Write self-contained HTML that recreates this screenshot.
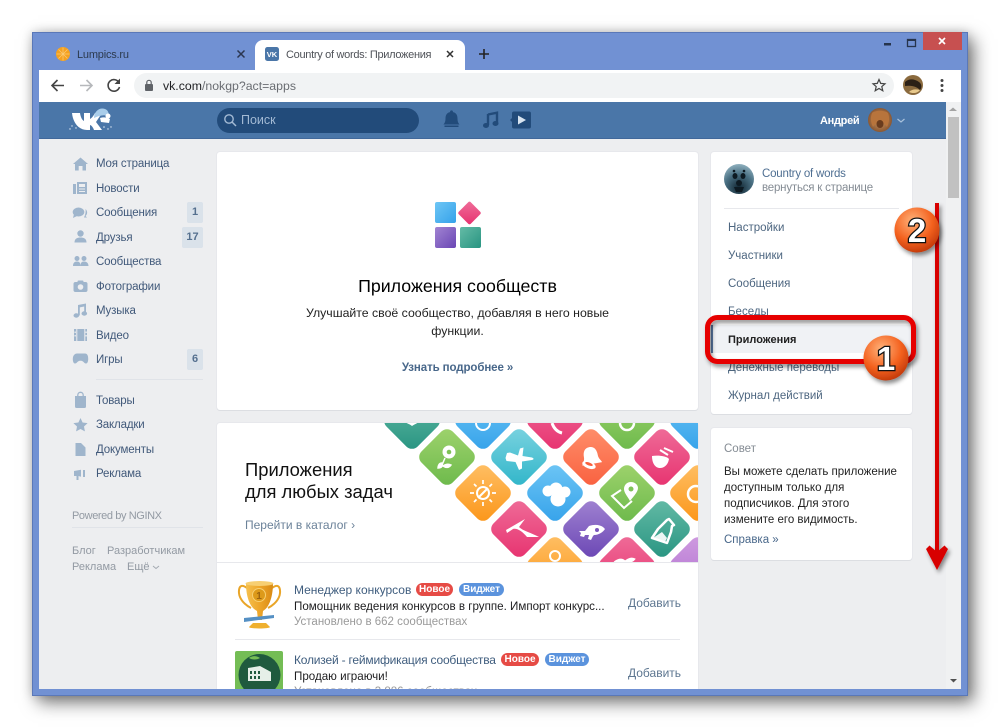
<!DOCTYPE html>
<html><head><meta charset="utf-8">
<style>
html,body{margin:0;padding:0;background:#fff;width:1000px;height:728px;overflow:hidden}
body{font-family:"Liberation Sans","Noto Sans CJK JP",sans-serif;position:relative}
.t{position:absolute;white-space:nowrap;line-height:16px;font-size:12px}
.b{position:absolute}
#win{position:absolute;left:32px;top:32px;width:936px;height:664px;background:#7191d3;box-shadow:6px 7px 16px rgba(0,0,0,.5),0 0 10px rgba(0,0,0,.18);outline:1px solid #5a78b8;outline-offset:-1px}
#page{position:absolute;left:39px;top:102px;width:922px;height:587px;background:#edeef0;overflow:hidden}
.in{position:absolute;left:-39px;top:-102px;width:1000px;height:728px}
.card{position:absolute;background:#fff;border-radius:3px;box-shadow:0 1px 0 #dcdee2,0 0 0 1px #e7e8ec}
.s{color:#41597a;left:96px;font-size:11.5px;letter-spacing:-.15px;margin-top:1px}
.r{color:#4d6680;left:728px;font-size:11.5px;margin-top:1px}
.badge{position:absolute;background:#dae2ea;border-radius:2px;color:#55708f;font-size:11px;text-align:center;line-height:21px;height:21px;font-weight:bold}
.pill{position:absolute;height:13px;line-height:13px;border-radius:7px;color:#fff;font-size:10px;font-weight:bold;text-align:center}
.f{color:#939aa3;font-size:11px}
</style></head>
<body>
<div id="win"></div>

<!-- tab strip -->
<div class="b" style="left:255px;top:40px;width:210px;height:30px;background:#fff;border-radius:8px 8px 0 0"></div>
<div class="b" style="left:39px;top:70px;width:922px;height:32px;background:#fff"></div>
<div class="b" style="left:134px;top:73px;width:760px;height:25px;background:#f1f3f4;border-radius:13px"></div>
<span class="t" style="left:77px;top:47px;color:#2c3a4e;font-size:11px;letter-spacing:-.2px">Lumpics.ru</span>
<span class="t" style="left:286px;top:47px;color:#4f5258;font-size:11px;letter-spacing:-.3px">Country of words: Приложения</span>
<span class="t" style="left:163px;top:78px;font-size:12.3px;color:#202124">vk.com<span style="color:#6a6d72">/nokgp?act=apps</span></span>

<div id="page"><div class="in">
  <div class="b" style="left:39px;top:102px;width:907px;height:36px;background:#4a76a8;box-shadow:0 1px 0 #41689a"></div>
  <div class="b" style="left:217px;top:108px;width:202px;height:25px;background:#224b7a;border-radius:13px"></div>
  <span class="t" style="left:241px;top:112px;color:#a3bad4;font-size:12.5px">Поиск</span>
  <span class="t" style="left:820px;top:113px;color:#fff;font-size:11px;font-weight:bold;letter-spacing:-.3px">Андрей</span>

  <!-- scrollbar -->
  <div class="b" style="left:946px;top:102px;width:15px;height:587px;background:#f0f1f2"></div>
  <div class="b" style="left:948px;top:117px;width:11px;height:81px;background:#c1c1c1"></div>

  <!-- left menu -->
  <span class="t s" style="top:155px">Моя страница</span>
  <span class="t s" style="top:180px">Новости</span>
  <span class="t s" style="top:204px">Сообщения</span>
  <span class="t s" style="top:229px">Друзья</span>
  <span class="t s" style="top:253px">Сообщества</span>
  <span class="t s" style="top:278px">Фотографии</span>
  <span class="t s" style="top:302px">Музыка</span>
  <span class="t s" style="top:327px">Видео</span>
  <span class="t s" style="top:351px">Игры</span>
  <div class="badge" style="left:187px;top:202px;width:16px">1</div>
  <div class="badge" style="left:182px;top:227px;width:21px">17</div>
  <div class="badge" style="left:187px;top:349px;width:16px">6</div>
  <div class="b" style="left:96px;top:379px;width:107px;height:1px;background:#e0e3e8"></div>
  <span class="t s" style="top:392px">Товары</span>
  <span class="t s" style="top:416px">Закладки</span>
  <span class="t s" style="top:441px">Документы</span>
  <span class="t s" style="top:465px">Реклама</span>
  <span class="t f" style="left:72px;top:508px;letter-spacing:-.4px">Powered by NGINX</span>
  <div class="b" style="left:72px;top:527px;width:131px;height:1px;background:#e0e3e8"></div>
  <span class="t f" style="left:72px;top:543px">Блог</span>
  <span class="t f" style="left:107px;top:543px">Разработчикам</span>
  <span class="t f" style="left:72px;top:559px">Реклама</span>
  <span class="t f" style="left:127px;top:559px">Ещё</span>

  <!-- centre card -->
  <div class="card" style="left:217px;top:152px;width:481px;height:258px"></div>
  <span class="t" style="left:217px;width:481px;text-align:center;top:277px;line-height:18px;font-size:17.8px;color:#000">Приложения сообществ</span>
  <span class="t" style="left:217px;width:481px;text-align:center;top:305px;font-size:12.3px;color:#222">Улучшайте своё сообщество, добавляя в него новые</span>
  <span class="t" style="left:217px;width:481px;text-align:center;top:323px;font-size:12.3px;color:#222">функции.</span>
  <span class="t" style="left:217px;width:481px;text-align:center;top:360px;font-size:11.5px;color:#48678a;font-weight:bold;letter-spacing:-.1px">Узнать подробнее »</span>

  <!-- banner card -->
  <div class="card" style="left:217px;top:423px;width:481px;height:320px"></div>
  <span class="t" style="left:245px;top:461px;line-height:18px;font-size:18.4px;color:#111">Приложения</span>
  <span class="t" style="left:245px;top:483px;line-height:18px;font-size:18.4px;color:#111">для любых задач</span>
  <span class="t" style="left:245px;top:517px;font-size:12px;color:#6b8299">Перейти в каталог ›</span>
  <div class="b" style="left:217px;top:562px;width:481px;height:1px;background:#e7e8ec"></div>

  <!-- row 1 -->
  <span class="t" style="left:294px;top:582px;font-size:12px;color:#3f5d7e">Менеджер конкурсов</span>
  <div class="pill" style="left:416px;top:583px;width:37px;background:#e64b45">Новое</div>
  <div class="pill" style="left:459px;top:583px;width:45px;background:#5b93dd">Виджет</div>
  <span class="t" style="left:294px;top:598px;font-size:11.6px;color:#1d1d1f;margin-top:1px">Помощник ведения конкурсов в группе. Импорт конкурс...</span>
  <span class="t" style="left:294px;top:614px;font-size:11.5px;color:#9a9a9a">Установлено в 662 сообществах</span>
  <span class="t" style="left:628px;top:595px;font-size:12px;color:#5d7690">Добавить</span>
  <div class="b" style="left:235px;top:639px;width:445px;height:1px;background:#e7e8ec"></div>
  <!-- row 2 -->
  <span class="t" style="left:294px;top:652px;font-size:12px;letter-spacing:-.2px;color:#3f5d7e">Колизей - геймификация сообщества</span>
  <div class="pill" style="left:501px;top:653px;width:38px;background:#e64b45">Новое</div>
  <div class="pill" style="left:545px;top:653px;width:44px;background:#5b93dd">Виджет</div>
  <span class="t" style="left:294px;top:669px;font-size:11.6px;color:#1d1d1f">Продаю играючи!</span>
  <span class="t" style="left:294px;top:684px;font-size:11.5px;color:#9a9a9a">Установлено в 3 886 сообществах</span>
  <span class="t" style="left:628px;top:665px;font-size:12px;color:#5d7690">Добавить</span>

  <!-- right card -->
  <div class="card" style="left:711px;top:152px;width:201px;height:262px"></div>
  <span class="t" style="left:762px;top:166px;font-size:11.5px;letter-spacing:-.2px;color:#4f6f92">Country of words</span>
  <span class="t" style="left:762px;top:180px;font-size:11.5px;letter-spacing:-.2px;color:#858c94">вернуться к странице</span>
  <div class="b" style="left:724px;top:208px;width:175px;height:1px;background:#e7e8ec"></div>
  <span class="t r" style="top:219px">Настройки</span>
  <span class="t r" style="top:247px">Участники</span>
  <span class="t r" style="top:275px">Сообщения</span>
  <span class="t r" style="top:303px">Беседы</span>
  <div class="b" style="left:711px;top:325px;width:201px;height:28px;background:#f0f2f5"></div>
  <div class="b" style="left:711px;top:325px;width:2px;height:28px;background:#5b7ba6"></div>
  <span class="t" style="left:728px;top:332px;font-size:11px;font-weight:bold;color:#222">Приложения</span>
  <span class="t r" style="top:359px">Денежные переводы</span>
  <span class="t r" style="top:387px">Журнал действий</span>

  <div class="card" style="left:711px;top:428px;width:201px;height:132px"></div>
  <span class="t" style="left:724px;top:441px;font-size:11.5px;color:#858c94">Совет</span>
  <span class="t" style="left:724px;top:464px;font-size:11.5px;color:#222">Вы можете сделать приложение</span>
  <span class="t" style="left:724px;top:480px;font-size:11.5px;color:#222">доступным только для</span>
  <span class="t" style="left:724px;top:496px;font-size:11.5px;color:#222">подписчиков. Для этого</span>
  <span class="t" style="left:724px;top:512px;font-size:11.5px;color:#222">измените его видимость.</span>
  <span class="t" style="left:724px;top:532px;font-size:11.5px;color:#48678a">Справка »</span>
</div></div>

<svg class="b" style="left:0;top:0" width="1000" height="728" viewBox="0 0 1000 728" xmlns="http://www.w3.org/2000/svg">
<defs>
 <linearGradient id="gG" x1="0" y1="0" x2="1" y2="1"><stop offset="0" stop-color="#9fd36d"/><stop offset="1" stop-color="#6cb94b"/></linearGradient>
 <linearGradient id="gB" x1="0" y1="0" x2="1" y2="1"><stop offset="0" stop-color="#6ec6f5"/><stop offset="1" stop-color="#35a2ea"/></linearGradient>
 <linearGradient id="gT" x1="0" y1="0" x2="1" y2="1"><stop offset="0" stop-color="#7bd3e0"/><stop offset="1" stop-color="#2fb5c9"/></linearGradient>
 <linearGradient id="gR" x1="0" y1="0" x2="1" y2="1"><stop offset="0" stop-color="#ff8f6b"/><stop offset="1" stop-color="#f9603f"/></linearGradient>
 <linearGradient id="gP" x1="0" y1="0" x2="1" y2="1"><stop offset="0" stop-color="#ef6d99"/><stop offset="1" stop-color="#e7326f"/></linearGradient>
 <linearGradient id="gO" x1="0" y1="0" x2="1" y2="1"><stop offset="0" stop-color="#ffc066"/><stop offset="1" stop-color="#fb9518"/></linearGradient>
 <linearGradient id="gV" x1="0" y1="0" x2="1" y2="1"><stop offset="0" stop-color="#a184d2"/><stop offset="1" stop-color="#6a46b4"/></linearGradient>
 <linearGradient id="gE" x1="0" y1="0" x2="1" y2="1"><stop offset="0" stop-color="#64bba6"/><stop offset="1" stop-color="#289481"/></linearGradient>
 <linearGradient id="gL" x1="0" y1="0" x2="1" y2="1"><stop offset="0" stop-color="#cf9be0"/><stop offset="1" stop-color="#b070d0"/></linearGradient>
 <linearGradient id="gCup" x1="0" y1="0" x2="1" y2="0"><stop offset="0" stop-color="#f5c04e"/><stop offset=".5" stop-color="#eea62a"/><stop offset="1" stop-color="#d98a14"/></linearGradient>
 <radialGradient id="ball" cx=".5" cy=".8" r=".8"><stop offset="0" stop-color="#0f2430"/><stop offset=".6" stop-color="#4b7184"/><stop offset="1" stop-color="#8fb0be"/></radialGradient>
 <radialGradient id="orb" cx=".4" cy=".3" r=".8"><stop offset="0" stop-color="#ffb27a"/><stop offset=".55" stop-color="#f4621f"/><stop offset="1" stop-color="#b52f05"/></radialGradient>
 <radialGradient id="dog" cx=".5" cy=".5" r=".6"><stop offset="0" stop-color="#d59a60"/><stop offset="1" stop-color="#7a4a2a"/></radialGradient>
 <clipPath id="ban"><rect x="380" y="423" width="318" height="139"/></clipPath>
 <clipPath id="bot"><rect x="0" y="0" width="1000" height="689"/></clipPath>
 <filter id="sh" x="-20%" y="-20%" width="150%" height="150%"><feDropShadow dx="2" dy="3" stdDeviation="2.200" flood-color="#000" flood-opacity=".45"/></filter>
 <g id="dm"><rect x="-22" y="-22" width="44" height="44" rx="8"/></g>
</defs>

<!-- tab bar icons -->
<circle cx="63" cy="54" r="7" fill="#f5a11f"/>
<path d="M63 47.5v13M56.5 54h13M58.5 49.5l9 9M67.500 49.5l-9 9" stroke="#fbc871" stroke-width=".8"/>
<path d="M237.500 50.500l7 7M244.500 50.500l-7 7" stroke="#2b3650" stroke-width="1.500"/>
<rect x="265" y="47" width="14" height="14" rx="2.500" fill="#4a76a8"/>
<text x="272" y="57" font-size="7.500" font-weight="bold" fill="#fff" text-anchor="middle" font-family="Liberation Sans">VK</text>
<path d="M447 51l6 6M453 51l-6 6" stroke="#333" stroke-width="1.500"/>
<path d="M484 49v10M479 54h10" stroke="#222" stroke-width="1.600"/>
<!-- window controls -->
<rect x="923" y="32" width="39" height="18" fill="#c75050"/>
<path d="M939 38l6 6M945 38l-6 6" stroke="#fff" stroke-width="1.700"/>
<rect x="884" y="43" width="7" height="2.500" fill="#26344c"/>
<rect x="907.500" y="39.500" width="8" height="7" fill="none" stroke="#26344c" stroke-width="1.300"/>
<path d="M907 40h9" stroke="#26344c" stroke-width="2"/>
<!-- toolbar -->
<g fill="none" stroke-width="1.600">
 <path d="M64 85.500H52.500M57.500 80l-5.500 5.500 5.500 5.500" stroke="#444"/>
 <path d="M80 85.500h11.500M86.500 80l5.500 5.500-5.500 5.500" stroke="#b6b8bb"/>
 <path d="M119.200 83a5.800 5.800 0 1 0 .3 4" stroke="#444"/>
</g>
<path d="M120 78.500v5.500h-5.500z" fill="#444"/>
<rect x="145" y="84" width="8" height="7" rx="1" fill="#5f6368"/>
<path d="M146.800 84v-1.500a2.200 2.200 0 0 1 4.400 0V84" fill="none" stroke="#5f6368" stroke-width="1.200"/>
<path d="M879 79.500l1.700 3.900 4.300.4-3.200 2.800 1 4.200-3.800-2.300-3.800 2.300 1-4.200-3.200-2.800 4.300-.4z" fill="none" stroke="#444" stroke-width="1.200"/>
<circle cx="913" cy="85" r="10" fill="#8a6a3e"/>
<path d="M905 82c4-4 10-3 14 0 3 2 3 6 1 8-3-3-7-5-15-4z" fill="#2b2016"/>
<path d="M909 92c3-3 7-3 11-2-2 3-7 4-11 2z" fill="#e8c98c"/>
<g fill="#444"><circle cx="942" cy="80.500" r="1.500"/><circle cx="942" cy="85.500" r="1.500"/><circle cx="942" cy="90.500" r="1.500"/></g>

<!-- VK header -->
<path d="M72 113h8c.6 4 2 7 4 8v-8h6v6c2-1 4-4 5-6h7l-6 9 6 8h-8c-1-3-3-5-4-5v5h-3c-8 0-14-7-15-17z" fill="#fff"/>
<path d="M94 118c0-7 6-11 11-9 3 1 4 4 4 8-3-3-9-2-15 1z" fill="#a9cdea"/>
<circle cx="108" cy="116" r="2.500" fill="#fff"/>
<path d="M100 118c3-1 7-1 10 1l-1 4-8-1z" fill="#fff"/>
<g fill="#dfe9f3"><circle cx="72" cy="126" r=".7"/><circle cx="76" cy="128" r=".7"/><circle cx="104" cy="127" r=".8"/><circle cx="108" cy="129" r=".7"/><circle cx="111" cy="127" r=".7"/><circle cx="70" cy="129" r=".7"/></g>
<circle cx="229" cy="119" r="4.200" fill="none" stroke="#a3bad4" stroke-width="1.400"/>
<path d="M232 122l4 4" stroke="#a3bad4" stroke-width="1.500"/>
<path d="M451.500 112c-4.500 0-6 3-6 6.500 0 3-.8 4.500-2 6h16c-1.200-1.500-2-3-2-6 0-3.500-1.500-6.500-6-6.500z" fill="#224b7a"/>
<rect x="444.500" y="125.500" width="14" height="1.500" fill="#224b7a"/><circle cx="451.500" cy="111.800" r="1.400" fill="#224b7a"/>
<path d="M488 114.500l9-1.800v10.800" fill="none" stroke="#224b7a" stroke-width="2.400"/><path d="M488 114v11" stroke="#224b7a" stroke-width="2.400"/>
<ellipse cx="486" cy="125.500" rx="3" ry="2.500" fill="#224b7a"/><ellipse cx="495.500" cy="123.500" rx="3" ry="2.500" fill="#224b7a"/>
<rect x="512" y="111.500" width="19" height="17" rx="2" fill="#224b7a"/><path d="M510 120l2.500-2.500v5z" fill="#224b7a"/>
<path d="M518 115.500l8 4.500-8 4.500z" fill="#d8e4f0"/>
<circle cx="880" cy="120" r="12" fill="url(#dog)"/>
<path d="M872 113c3-3 13-3 16 0 2 5 1 10-1 14-2-3-4-4-7-4s-5 1-7 4c-2-4-3-9-1-14z" fill="#b8743c"/>
<ellipse cx="880" cy="124" rx="3.500" ry="4" fill="#6a3c1e"/>
<path d="M897.500 119l3.500 3 3.500-3" fill="none" stroke="#a9c2dc" stroke-width="1.200"/>
<!-- scrollbar arrows -->
<path d="M953 107.500l4 3.500h-8z" fill="#a3a3a3"/>
<path d="M950 679h7l-3.500 3.500z" fill="#505050"/>

<!-- left menu icons -->
<g fill="#9fb5cc">
 <path d="M80.500 157.500L88 164H86v6.500h-3.500v-4.500h-3.800v4.500H75V164h-2z"/>
 <path d="M73 184h3v10h-3zM77 182h10v12H77z"/><path d="M79 184h6v3h-6zM79 188.500h6v1h-6zM79 191h6v1h-6z" fill="#edeef0"/>
 <ellipse cx="78.500" cy="212" rx="5.800" ry="4.500"/><path d="M74 214l-1 4 4-2z"/><path d="M85.500 209c2.200 2.200 2.200 5 0 7l1.500 1.500h-3c1.500-3 2-6 1.500-8.500z"/>
 <circle cx="80.500" cy="233.500" r="3.200"/><path d="M74.500 242.500c0-4 3-5 6-5s6 1 6 5z"/>
 <circle cx="77" cy="258.500" r="2.500"/><circle cx="84" cy="258.500" r="2.500"/><path d="M73 266c0-3 1.500-4.500 4-4.500s3.500 1.500 3.500 4.500zM80.500 266c0-3 1-4.500 3.500-4.500s4.500 1.500 4.500 4.500z"/>
 <rect x="73.500" y="282" width="14" height="10" rx="2"/><rect x="77.500" y="280.500" width="6" height="3" rx="1"/>
 <path d="M78 305l8-1.500v10h-1.800v-7l-4.400.9V315.500H78z"/><ellipse cx="76.300" cy="315.500" rx="2.800" ry="2.200"/><ellipse cx="84.300" cy="313.500" rx="2.800" ry="2.200"/>
 <rect x="74" y="329" width="13" height="12"/>
 <path d="M76 353.500h9c2.300 0 3.200 2 3.200 5.500 0 2.800-.9 4.500-2.200 4.500-2 0-2.500-2.800-5-2.800h-1c-2.500 0-3 2.800-5 2.800-1.300 0-2.200-1.700-2.200-4.500 0-3.500 1.900-5.500 4.200-5.500z"/>
 <path d="M75 396h11v10.500a1.500 1.500 0 0 1-1.500 1.500h-8a1.500 1.500 0 0 1-1.500-1.500z"/><path d="M77.800 396v-1a2.700 2.700 0 0 1 5.400 0v1" fill="none" stroke="#9fb5cc" stroke-width="1.300"/>
 <path d="M80.500 418l2.100 4.500 5 .6-3.600 3.400.9 4.900-4.400-2.400-4.400 2.400.9-4.900-3.600-3.400 5-.6z"/>
 <path d="M75.500 443h5.500l4.500 4.500V456h-10z"/>
 <path d="M74 471l7-1.300v7L78.500 476v4h-2v-4L74 476zM83 470h2v7h-2z"/>
</g>
<circle cx="80.500" cy="287" r="2.800" fill="#edeef0"/>
<g fill="#edeef0"><rect x="76.300" y="329" width="1" height="12"/><rect x="84.300" y="329" width="1" height="12"/><rect x="74.500" y="331.500" width="1.300" height="1.500"/><rect x="74.500" y="335" width="1.300" height="1.500"/><rect x="85.500" y="331.500" width="1.300" height="1.500"/><rect x="85.500" y="335" width="1.300" height="1.500"/></g>
<path d="M153 566l3 2.500 3-2.500" fill="none" stroke="#a3a9b1" stroke-width="1"/>

<!-- apps icon -->
<rect x="435" y="202" width="21" height="21" rx="2" fill="url(#gB)"/>
<rect x="435" y="227" width="21" height="21" rx="2" fill="url(#gV)"/>
<rect x="460" y="227" width="21" height="21" rx="2" fill="url(#gE)"/>
<g transform="translate(469.500 213) rotate(45)"><rect x="-8.500" y="-8.500" width="17" height="17" rx="2" fill="url(#gP)"/></g>

<!-- banner -->
<g clip-path="url(#ban)">
 <g transform="translate(412 421) rotate(45)" fill="url(#gE)"><use href="#dm"/></g>
 <g transform="translate(483 421) rotate(45)" fill="url(#gB)"><use href="#dm"/></g>
 <g transform="translate(555 421) rotate(45)" fill="url(#gP)"><use href="#dm"/></g>
 <g transform="translate(627 421) rotate(45)" fill="url(#gG)"><use href="#dm"/></g>
 <g transform="translate(698 421) rotate(45)" fill="url(#gB)"><use href="#dm"/></g>
 <g transform="translate(447 457) rotate(45)" fill="url(#gG)"><use href="#dm"/></g>
 <g transform="translate(519 457) rotate(45)" fill="url(#gT)"><use href="#dm"/></g>
 <g transform="translate(591 457) rotate(45)" fill="url(#gR)"><use href="#dm"/></g>
 <g transform="translate(662 457) rotate(45)" fill="url(#gP)"><use href="#dm"/></g>
 <g transform="translate(483 493) rotate(45)" fill="url(#gO)"><use href="#dm"/></g>
 <g transform="translate(555 493) rotate(45)" fill="url(#gB)"><use href="#dm"/></g>
 <g transform="translate(627 493) rotate(45)" fill="url(#gG)"><use href="#dm"/></g>
 <g transform="translate(698 493) rotate(45)" fill="url(#gO)"><use href="#dm"/></g>
 <g transform="translate(519 529) rotate(45)" fill="url(#gP)"><use href="#dm"/></g>
 <g transform="translate(591 529) rotate(45)" fill="url(#gV)"><use href="#dm"/></g>
 <g transform="translate(662 529) rotate(45)" fill="url(#gE)"><use href="#dm"/></g>
 <g transform="translate(555 565) rotate(45)" fill="url(#gO)"><use href="#dm"/></g>
 <g transform="translate(627 565) rotate(45)" fill="url(#gP)"><use href="#dm"/></g>
 <g transform="translate(698 565) rotate(45)" fill="url(#gL)"><use href="#dm"/></g>
 <!-- top row glyphs -->
 <path d="M404 421c3 3 6 3 8 5 3-2 6-3 8-5z" fill="#fff"/>
 <circle cx="483" cy="423" r="7" fill="none" stroke="#fff" stroke-width="2"/>
 <path d="M552 423c2 6 6 9 10 10" fill="none" stroke="#fff" stroke-width="3"/>
 <circle cx="627" cy="423" r="7" fill="none" stroke="#fff" stroke-width="2.500"/>
 <!-- flower -->
 <circle cx="449" cy="452" r="6.500" fill="#fff"/><circle cx="449" cy="452" r="2.300" fill="#7fc257"/>
 <path d="M445 458l-3 7M442 463c-3 0-4 3-4 5 3 0 5-1 4-5zM443 466c3-2 6-2 8-1-2 3-5 3-8 1z" fill="#fff" stroke="#fff" stroke-width="1.500"/>
 <!-- plane -->
 <path d="M507 453l3-.5 8 3 2-7 3.500-1-1 8.500 9.500 1.500c2 .8 2 2 0 2.500l-10 1.500 0 7-3 1.500-3.500-8-9-1-1-3z" fill="#fff"/>
 <!-- bell -->
 <path d="M591 447c5 0 7 4 7 9 0 4 2 5 3 8l-20 0c1-3 3-4 3-8 0-5 2-9 7-9z" fill="#fff" transform="rotate(-10 591 457)"/>
 <ellipse cx="589" cy="465" rx="7" ry="3.500" fill="#fff" transform="rotate(20 589 465)"/><ellipse cx="589" cy="464" rx="4" ry="1.500" fill="#f9603f" transform="rotate(20 589 464)"/>
 <!-- bowl -->
 <path d="M652 456c6-1 15 0 17 3-1 6-5 9-9 9-5 0-8-5-8-12z" fill="#fff"/>
 <path d="M660 450l8 5M664 448l9 4" stroke="#fff" stroke-width="2" />
 <!-- sun -->
 <circle cx="483" cy="493" r="6" fill="none" stroke="#fff" stroke-width="2"/><path d="M478 498l10-10" stroke="#fff" stroke-width="2"/>
 <path d="M483 480v4M483 502v4M470 493h4M492 493h4M474 484l2.500 2.500M492 484l-2.500 2.500M474 502l2.500-2.500M492 502l-2.500-2.500" stroke="#fff" stroke-width="1.700"/>
 <!-- cloud -->
 <g fill="#fff"><circle cx="548" cy="491" r="5.500"/><circle cx="556" cy="489" r="6.500"/><circle cx="565" cy="492" r="5.500"/><circle cx="558" cy="499" r="7.500"/></g>
 <!-- pin -->
 <path d="M631 482c4 0 7 3 7 6 0 4-5 9-8 13-2-4-6-8-6-12 0-4 3-7 7-7z" fill="#fff"/><circle cx="631" cy="489" r="2.500" fill="#7fc257"/>
 <path d="M621 490l-9 6 12 12 8-7" fill="none" stroke="#fff" stroke-width="2"/>
 <circle cx="696" cy="494" r="8" fill="none" stroke="#fff" stroke-width="2.500"/>
 <!-- boot -->
 <path d="M506 530L525 519 519 527C523 531 532 533 539 537L527 537C522 531 517 528 513 529L507 533Z" fill="#fff"/>
 <!-- rocket -->
 <path d="M579 531l6 0 4-5c6-2 11-1 14 1l2 2c-2 3-6 6-11 6l-1 1-2 4-3-1 1-4-4 0-1 2-4-1 1-3z" fill="#fff"/><circle cx="597" cy="530" r="2" fill="#7a55bc"/>
 <!-- flask -->
 <path d="M667 520l-9 9-6 9 15 5 4-11 1-6 2-1-5-6z" fill="none" stroke="#fff" stroke-width="2.500" stroke-linejoin="round"/>
 <path d="M653 538l9-6 5 6-2 4z" fill="#fff" opacity=".9"/>
 <circle cx="555" cy="556" r="5" fill="none" stroke="#fff" stroke-width="2"/>
 <path d="M614 562c4-3 8-4 11-1 3-2 6-4 10-2-2 3-7 4-9 3" fill="#fff" stroke="#fff"/>
</g>

<!-- list icons, clipped by window frame -->
<g clip-path="url(#bot)">
 <!-- trophy -->
 <path d="M247 588c-9-7-9 5-7 9 2 5 7 9 11 11M272 588c9-7 9 5 7 9-2 5-7 9-11 11" fill="none" stroke="#e9a528" stroke-width="2"/>
 <path d="M246 583h27c0 12-3 24-10 28l-1 9h-4l-1-9c-8-4-11-16-11-28z" fill="url(#gCup)"/>
 <ellipse cx="259.500" cy="583.500" rx="14" ry="2.500" fill="#f7cf72"/>
 <circle cx="259" cy="595" r="6.500" fill="#dd9a1a" stroke="#f7d072" stroke-width="1"/>
 <text x="259" y="599" font-size="10" font-weight="bold" text-anchor="middle" fill="#9c6410" font-family="Liberation Sans">1</text>
 <path d="M244 618l30-3 0 3-30 4z" fill="#5590c4"/>
 <path d="M253 623h13l4 4c0 2-21 2-21 0z" fill="#efb02f"/>
 <!-- coliseum icon -->
 <rect x="235" y="651" width="48" height="48" rx="2" fill="#74bd55"/>
 <circle cx="259.500" cy="675" r="21" fill="#1f5a3e"/>
 <path d="M249 658c4-3 8-2 11 0-3 2-8 2-11 0z" fill="#74bd55"/>
 <path d="M248 668l12-2 11 6v9h-23z" fill="#e6efe8"/>
 <g fill="#1f5a3e"><rect x="250" y="671" width="2" height="3"/><rect x="254" y="671" width="2" height="3"/><rect x="258" y="671" width="2" height="3"/><rect x="250" y="676" width="2" height="3"/><rect x="254" y="676" width="2" height="3"/><rect x="258" y="676" width="2" height="3"/></g>
 <!-- community avatar -->
 <circle cx="739" cy="179" r="15" fill="url(#ball)"/>
 <g fill="#0d1a22"><ellipse cx="735" cy="176" rx="2.500" ry="3"/><ellipse cx="743" cy="176" rx="2.500" ry="3"/><circle cx="739" cy="183" r="3"/><circle cx="734" cy="171" r="1.300"/><circle cx="744" cy="171" r="1.300"/><path d="M734 187h10l-2 5h-6z"/></g>
</g>

<!-- annotations -->
<g filter="url(#sh)">
 <rect x="707.500" y="317.500" width="206" height="44" rx="10" fill="none" stroke="#e60000" stroke-width="5"/>
</g>
<g filter="url(#sh)">
 <path d="M935 203h4v350h-4z" fill="#d80000"/>
 <path d="M926 549l3.500-3.500 7.500 6.500 7.500-6.500 3.500 3.500-11 21z" fill="#d80000"/>
</g>
<g filter="url(#sh)"><circle cx="917" cy="230" r="22.500" fill="url(#orb)"/></g>
<text x="917" y="242" font-size="33" font-weight="bold" text-anchor="middle" fill="#fff" stroke="#111" stroke-width="2.500" paint-order="stroke" font-family="Liberation Sans">2</text>
<g filter="url(#sh)"><circle cx="886" cy="358" r="22.500" fill="url(#orb)"/></g>
<text x="886" y="370" font-size="33" font-weight="bold" text-anchor="middle" fill="#fff" stroke="#111" stroke-width="2.500" paint-order="stroke" font-family="Liberation Sans">1</text>
</svg>
</body></html>
